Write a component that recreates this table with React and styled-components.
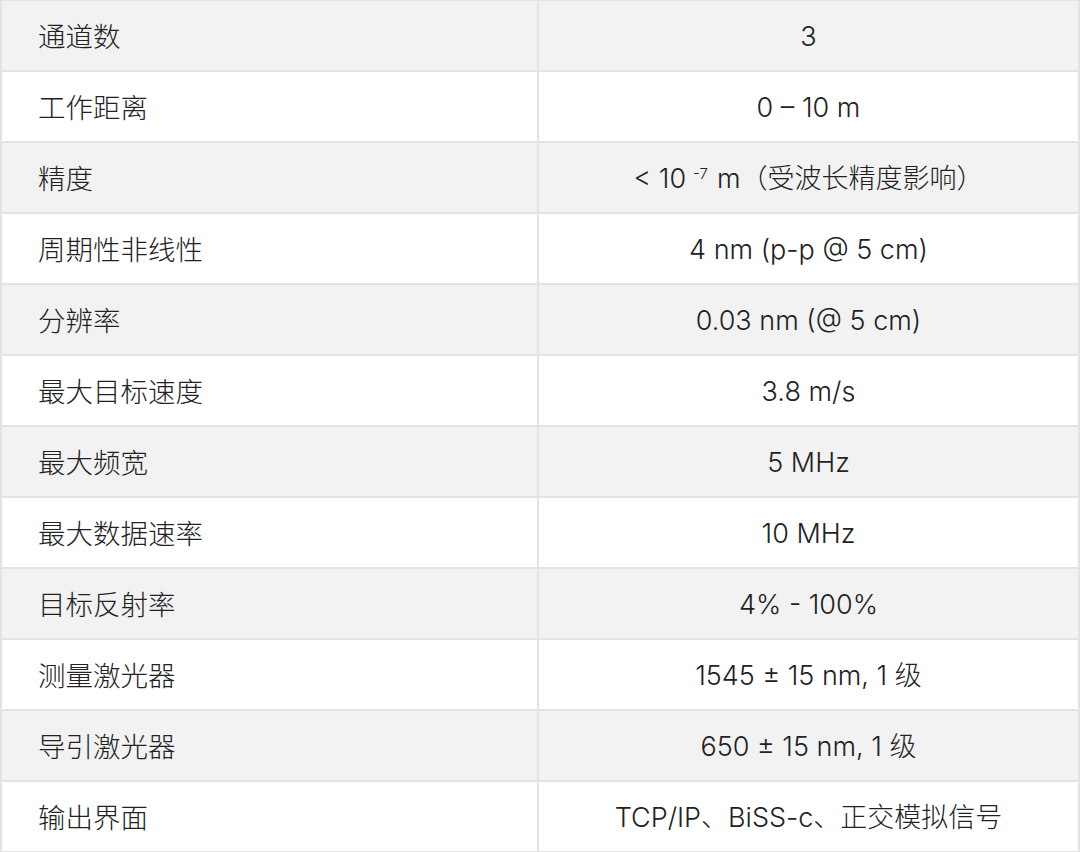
import React from 'react';
import styled, { createGlobalStyle } from 'styled-components';

const Global = createGlobalStyle`
  html, body {
    margin: 0;
    padding: 0;
    background: #ffffff;
  }
  body {
    font-family: Inter, "Noto Sans CJK SC", "Noto Sans", sans-serif;
    color: #222222;
  }
`;

const Table = styled.div`
  width: 1080px;
  box-sizing: border-box;
  border-top: 1px solid #e3e3e3;
  border-left: 2px solid #e3e3e3;
  border-right: 2px solid #e3e3e3;
`;

const Row = styled.div`
  display: grid;
  grid-template-columns: 537px 1fr;
  height: 71px;
  box-sizing: border-box;
  border-bottom: 2px solid #e3e3e3;
  background: ${p => (p.$shaded ? '#f2f2f2' : '#ffffff')};
`;

const Label = styled.div`
  display: flex;
  align-items: center;
  padding: 0 0 2px 36px;
  font-size: 27.5px;
  font-weight: 300;
  color: #222222;
  border-right: 2px solid #e3e3e3;
  white-space: nowrap;
`;

const Value = styled.div`
  display: flex;
  align-items: center;
  justify-content: center;
  padding-top: 2px;
  font-size: 27px;
  line-height: 34px;
  font-weight: 300;
  color: #222222;
  white-space: nowrap;
`;

const Sup = styled.sup`
  font-size: 15px;
  line-height: 0;
  position: relative;
  top: -5px;
  margin: 0 9px 0 7px;
`;

const rows = [
  ['通道数', '3'],
  ['工作距离', '0 – 10 m'],
  ['精度', <>&lt; 10<Sup>-7</Sup>m（受波长精度影响）</>],
  ['周期性非线性', '4 nm (p-p @ 5 cm)'],
  ['分辨率', '0.03 nm (@ 5 cm)'],
  ['最大目标速度', '3.8 m/s'],
  ['最大频宽', '5 MHz'],
  ['最大数据速率', '10 MHz'],
  ['目标反射率', '4% - 100%'],
  ['测量激光器', '1545 ± 15 nm, 1 级'],
  ['导引激光器', '650 ± 15 nm, 1 级'],
  ['输出界面', 'TCP/IP、BiSS-c、正交模拟信号'],
];

export default function App() {
  return (
    <>
      <Global />
      <Table>
        {rows.map(([label, value], i) => (
          <Row key={i} $shaded={i % 2 === 0}>
            <Label>{label}</Label>
            <Value>{value}</Value>
          </Row>
        ))}
      </Table>
    </>
  );
}
